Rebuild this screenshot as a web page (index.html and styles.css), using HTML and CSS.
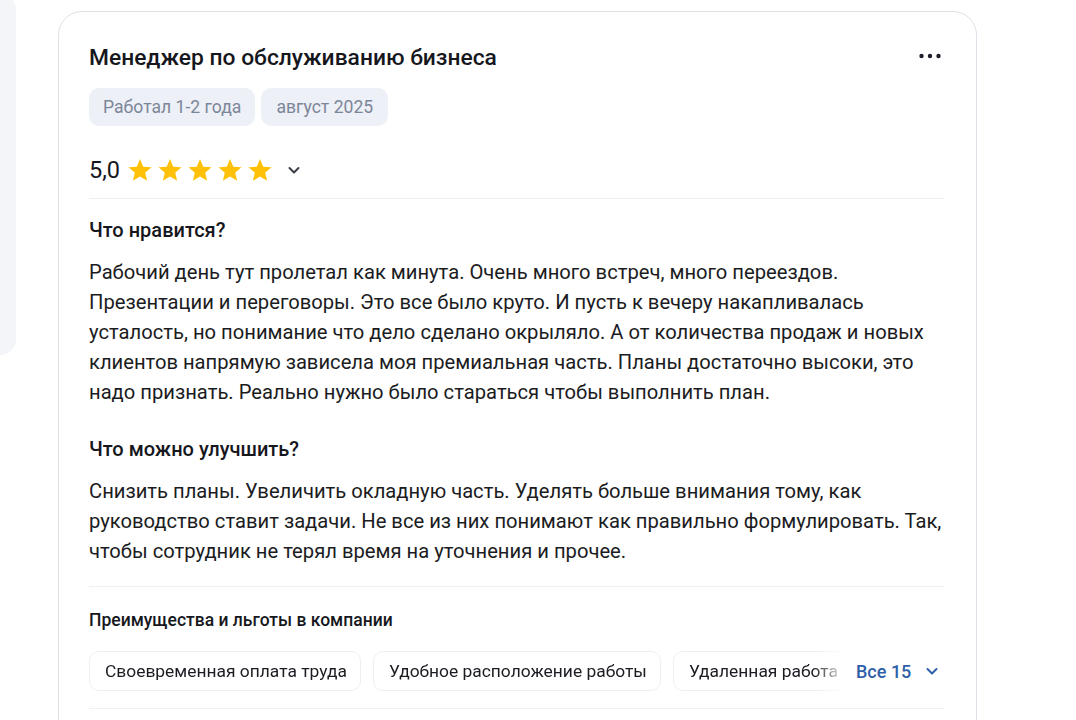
FILE: index.html
```html
<!DOCTYPE html>
<html lang="ru">
<head>
<meta charset="utf-8">
<link rel="stylesheet" href="styles.css">
</head>
<body>
<div class="page">
  <aside class="side"></aside>
  <article class="card">
    <header class="head">
      <h2 class="title">Менеджер по обслуживанию бизнеса</h2>
      <button class="more" aria-label="Ещё">
        <svg width="24" height="8" viewBox="0 0 24 8"><circle cx="3.5" cy="4" r="2.2" fill="#1b1f2a"/><circle cx="12" cy="4" r="2.2" fill="#1b1f2a"/><circle cx="20.5" cy="4" r="2.2" fill="#1b1f2a"/></svg>
      </button>
    </header>
    <div class="tags">
      <span class="tag">Работал 1-2 года</span>
      <span class="tag">август 2025</span>
    </div>
    <div class="rating">
      <span class="score">5,0</span>
      <div class="stars">
        <svg class="star" viewBox="0 0 24 24"><path d="M12 1.8l3 7.1 7.6.6-5.8 5 1.8 7.5L12 18l-6.6 4 1.8-7.5-5.8-5 7.6-.6z"/></svg>
        <svg class="star" viewBox="0 0 24 24"><path d="M12 1.8l3 7.1 7.6.6-5.8 5 1.8 7.5L12 18l-6.6 4 1.8-7.5-5.8-5 7.6-.6z"/></svg>
        <svg class="star" viewBox="0 0 24 24"><path d="M12 1.8l3 7.1 7.6.6-5.8 5 1.8 7.5L12 18l-6.6 4 1.8-7.5-5.8-5 7.6-.6z"/></svg>
        <svg class="star" viewBox="0 0 24 24"><path d="M12 1.8l3 7.1 7.6.6-5.8 5 1.8 7.5L12 18l-6.6 4 1.8-7.5-5.8-5 7.6-.6z"/></svg>
        <svg class="star" viewBox="0 0 24 24"><path d="M12 1.8l3 7.1 7.6.6-5.8 5 1.8 7.5L12 18l-6.6 4 1.8-7.5-5.8-5 7.6-.6z"/></svg>
      </div>
      <svg class="chev" width="16" height="16" viewBox="0 0 16 16"><path d="M3.5 6l4.5 4.5L12.5 6" fill="none" stroke="#3a3d45" stroke-width="2" stroke-linecap="round" stroke-linejoin="round"/></svg>
    </div>
    <div class="divider"></div>
    <section class="block">
      <h3 class="block-title">Что нравится?</h3>
      <p class="text">Рабочий день тут пролетал как минута. Очень много встреч, много переездов. Презентации и переговоры. Это все было круто. И пусть к вечеру накапливалась усталость, но понимание что дело сделано окрыляло. А от количества продаж и новых клиентов напрямую зависела моя премиальная часть. Планы достаточно высоки, это надо признать. Реально нужно было стараться чтобы выполнить план.</p>
    </section>
    <section class="block">
      <h3 class="block-title">Что можно улучшить?</h3>
      <p class="text">Снизить планы. Увеличить окладную часть. Уделять больше внимания тому, как руководство ставит задачи. Не все из них понимают как правильно формулировать. Так, чтобы сотрудник не терял время на уточнения и прочее.</p>
    </section>
    <div class="divider second"></div>
    <section class="benefits">
      <h4 class="benefits-title">Преимущества и льготы в компании</h4>
      <div class="chips-row">
        <div class="chips">
          <span class="chip">Своевременная оплата труда</span>
          <span class="chip">Удобное расположение работы</span>
          <span class="chip">Удаленная работа</span>
        </div>
        <button class="all">Все 15
          <svg width="16" height="16" viewBox="0 0 16 16"><path d="M3.5 6l4.5 4.5L12.5 6" fill="none" stroke="#2f5fa8" stroke-width="2" stroke-linecap="round" stroke-linejoin="round"/></svg>
        </button>
      </div>
    </section>
    <div class="divider third"></div>
  </article>
</div>
</body>
</html>
```

FILE: styles.css
```css
* { box-sizing: border-box; }
html, body { margin: 0; padding: 0; background: #fff; }
body {
  font-family: Roboto, "Noto Sans", "Liberation Sans", sans-serif;
  color: #1a1b22;
  overflow: hidden;
  height: 720px;
}
.page {
  display: flex;
  align-items: flex-start;
}
.side {
  width: 16px;
  height: 361px;
  margin-top: -6px;
  background: #f4f5f8;
  border-radius: 0 16px 16px 0;
  flex: none;
}
.card {
  margin-left: 42px;
  margin-top: 11px;
  width: 919px;
  border: 1px solid #dde1e8;
  border-radius: 24px;
  padding: 30px 32px 40px 30px;
  flex: none;
}
.head {
  display: flex;
  justify-content: space-between;
  align-items: center;
}
.title {
  margin: 0;
  font-size: 22.8px;
  line-height: 32px;
  font-weight: 500;
  color: #16171d;
}
.more {
  border: 0;
  background: none;
  padding: 0;
  margin-right: 2px;
  margin-top: -4px;
  display: flex;
}
.tags {
  display: flex;
  gap: 6px;
  margin-top: 14px;
}
.tag {
  background: #edf0f6;
  color: #7c8699;
  border-radius: 10px;
  height: 38px;
  padding: 0 14px 0 14px;
  display: flex;
  align-items: center;
  font-size: 17.6px;
}
.tag + .tag { padding: 0 15px; }
.rating {
  display: flex;
  align-items: center;
  margin-top: 24px;
  height: 40px;
}
.score {
  font-size: 23.5px;
  font-weight: 400;
  color: #15161b;
  margin-right: 7px;
}
.stars {
  display: flex;
  gap: 4px;
}
.star {
  width: 26px;
  height: 26px;
  fill: #ffc107;
}
.chev {
  margin-left: 13px;
}
.divider {
  height: 1px;
  background: #eef0f4;
  margin-top: 8px;
}
.block { margin-top: 20px; }
.block + .block { margin-top: 31px; }
.block-title {
  margin: 0;
  font-size: 20px;
  line-height: 22px;
  font-weight: 500;
  color: #16171d;
}
.text {
  margin: 16px 0 0;
  font-size: 20.2px;
  line-height: 30px;
  color: #1b1c22;
}
.divider.second { margin-top: 20px; }
.benefits { margin-top: 22px; }
.benefits-title {
  margin: 0;
  font-size: 17.5px;
  line-height: 22px;
  font-weight: 500;
  color: #16171d;
}
.chips-row {
  display: flex;
  align-items: center;
  margin-top: 20px;
}
.chips {
  display: flex;
  gap: 12px;
  width: 756px;
  overflow: hidden;
  flex: none;
  -webkit-mask-image: linear-gradient(to right, #000 725px, transparent 756px);
  mask-image: linear-gradient(to right, #000 725px, transparent 756px);
}
.chip {
  flex: none;
  height: 40px;
  padding: 0 13px 0 15px;
  display: flex;
  align-items: center;
  border: 1px solid #eceef3;
  border-radius: 10px;
  font-size: 17.4px;
  color: #1b1c22;
}
.all {
  border: 0;
  background: none;
  padding: 0;
  margin-left: 11px;
  display: flex;
  align-items: center;
  gap: 13px;
  font-family: inherit;
  font-size: 18px;
  font-weight: 500;
  color: #2f5fa8;
}
.divider.third { margin-top: 17px; }
```
